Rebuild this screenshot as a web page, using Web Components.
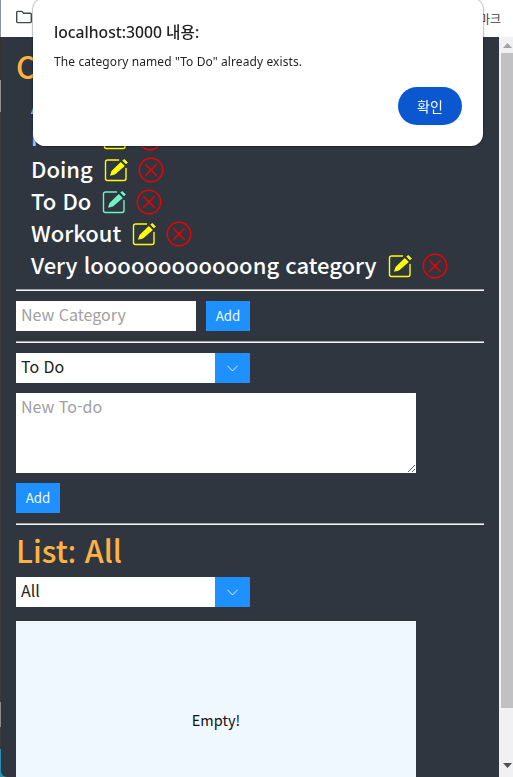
<!DOCTYPE html>
<html lang="ko">
<head>
<meta charset="utf-8">
<title>To-do</title>
<style>
  html, body { margin: 0; height: 777px; overflow: hidden; background: #fff; }
  /* the CJK cut raises its colon, the reference has it on the baseline */
  .colon { font-family: "Noto Sans", sans-serif; }
</style>
</head>
<body>
<browser-frame>
  <todo-title>Categories</todo-title>
  <category-list>
    <category-row active>All</category-row>
    <category-row active>Notes</category-row>
    <category-row>Doing</category-row>
    <category-row hover>To Do</category-row>
    <category-row>Workout</category-row>
    <category-row>Very loooooooooooong category</category-row>
  </category-list>
  <todo-rule class="first"></todo-rule>
  <new-category></new-category>
  <todo-rule></todo-rule>
  <new-todo></new-todo>
  <todo-rule class="last"></todo-rule>
  <todo-title>List<span class="colon">:</span> All</todo-title>
  <select-box value="All"></select-box>
  <empty-list>Empty!</empty-list>
</browser-frame>
<alert-dialog heading="localhost:3000 내용:" button="확인">The category named "To Do" already exists.</alert-dialog>

<script>
const UI_FONT = `"Noto Sans CJK JP", "Noto Sans", sans-serif`;

class BrowserFrame extends HTMLElement {
  constructor(){
    super();
    this.attachShadow({mode: "open"});
    this.shadowRoot.innerHTML = /* html */`
    <style>
      :host {
        display: flex;
        flex-direction: column;
        width: 513px;
        height: 777px;
        overflow: hidden;
        font-family: ${UI_FONT};
      }
      .bookmarks {
        flex: 0 0 37px;
        display: flex;
        align-items: center;
        justify-content: space-between;
        padding: 0 12px 0 15px;
        background: #fff;
        box-shadow: inset 1px 0 0 #8d979c;
        font: 12px "Noto Sans CJK KR", sans-serif;
        color: #3c4043;
      }
      .bookmarks svg { display: block; margin-top: -3px; }
      .bookmarks span { margin-top: -1px; }
      .window {
        flex: 1;
        min-height: 0;
        display: flex;
        background: linear-gradient(#333 0 43px, #8f8f8f 43px 75px, #3a3a3a 75px 665px, #8a8a8a 665px 690px, #3a3a3a 690px 712px, #2a8fb0 712px);
      }
      .page {
        flex: 1;
        min-width: 0;
        margin-left: 1px;
        padding: 4px 15px 0 15px;
        background: #2f3640;
        border-bottom-left-radius: 6px;
        overflow: hidden;
      }
      .scrollbar {
        flex: 0 0 14px;
        display: flex;
        flex-direction: column;
        align-items: flex-end;
        background: #f1f1f1;
      }
      .arrow {
        flex: 0 0 16px;
        width: 12px;
        display: flex;
        align-items: center;
        justify-content: center;
      }
      .thumb { flex: 0 0 655px; width: 12px; background: #c1c1c1; }
      .spacer { flex: 1; }
    </style>
    <div class="bookmarks">
      <svg width="18" height="14" viewBox="0 0 18 14" fill="none" stroke="#45484c" stroke-width="1.4" stroke-linejoin="round">
        <path d="M1.700 2.400a1 1 0 0 1 1-1h4.200l1.800 1.900h6.600a1 1 0 0 1 1 1v7.300a1 1 0 0 1-1 1H2.700a1 1 0 0 1-1-1z"/>
      </svg>
      <span>모든 북마크</span>
    </div>
    <div class="window">
      <div class="page"><slot></slot></div>
      <div class="scrollbar">
        <div class="arrow"><svg width="9" height="5"><path d="M4.500 0 9 5H0z" fill="#a3a3a3"/></svg></div>
        <div class="thumb"></div>
        <div class="spacer"></div>
        <div class="arrow"><svg width="9" height="5"><path d="M0 0h9L4.500 5z" fill="#505050"/></svg></div>
        <div style="height:4px"></div>
      </div>
    </div>
    `;
  }
}

class TodoTitle extends HTMLElement {
  constructor(){
    super();
    this.attachShadow({mode: "open"});
    this.shadowRoot.innerHTML = /* html */`
    <style>
      :host {
        display: block;
        font-size: 30.5px;
        font-weight: 500;
        line-height: 50px;
        height: 52px;
        color: #ffb142;
        white-space: nowrap;
      }
    </style>
    <slot></slot>
    `;
  }
}

class CategoryList extends HTMLElement {
  constructor(){
    super();
    this.attachShadow({mode: "open"});
    this.shadowRoot.innerHTML = /* html */`
    <style>
      :host { display: block; margin-top: -3px; padding-left: 15px; }
    </style>
    <slot></slot>
    `;
  }
}

class CategoryRow extends HTMLElement {
  constructor(){
    super();
    this.attachShadow({mode: "open"});
    this.shadowRoot.innerHTML = /* html */`
    <style>
      :host {
        display: flex;
        align-items: center;
        height: 32px;
        font-size: 22px;
        font-weight: 500;
        color: #fff;
        white-space: nowrap;
        --edit-color: #ffff00;
      }
      :host([active]) { color: #9fd4ff; }
      :host([hover]) { --edit-color: #6ff2c4; }
      .label { margin-top: -4px; }
      .edit { margin-left: 11px; color: var(--edit-color); }
      .remove { margin-left: 10px; }
      svg { display: block; flex: none; }
    </style>
    <span class="label"><slot></slot></span>
    <svg class="edit" width="24" height="24" viewBox="0 0 24 24">
      <path d="M14.500 2H3.500a2 2 0 0 0-2 2v16.500a2 2 0 0 0 2 2H20a2 2 0 0 0 2-2V10.500" fill="none" stroke="currentColor" stroke-width="1.4" stroke-linecap="round"/>
      <path d="M6 17.800 7.500 13 16.800 3.900l4 4L11 16.400z" fill="currentColor"/>
      <path d="M20.200 1.200 23.500 4.500 22 6 18.700 2.700z" fill="currentColor" stroke="currentColor" stroke-width=".6" stroke-linejoin="round"/>
    </svg>
    <svg class="remove" width="26" height="26" viewBox="0 0 26 26" fill="none" stroke="#f00000" stroke-width="1.5">
      <circle cx="13" cy="13" r="11.700"/>
      <path d="M7.300 7.300 18.700 18.700M18.700 7.300 7.300 18.700"/>
    </svg>
    `;
  }
}

class TodoRule extends HTMLElement {
  constructor(){
    super();
    this.attachShadow({mode: "open"});
    this.shadowRoot.innerHTML = /* html */`
    <style>
      :host {
        display: block;
        height: 1px;
        margin: 10px 0;
        background: #a3a5a8;
        border-bottom: 1px solid #f4f4f4;
      }
      :host(.first) { margin-top: 7px; }
      :host(.last) { margin-bottom: 0; }
    </style>
    `;
  }
}

const FIELD_STYLES = /* css */`
  input, textarea, select {
    box-sizing: border-box;
    margin: 0;
    border: 0;
    border-radius: 0;
    outline: 0;
    background: #fff;
    color: #222;
    font: 16px ${UI_FONT};
  }
  ::placeholder { color: #a0a0a0; opacity: 1; }
`;

const BUTTON_STYLES = /* css */`
  button {
    width: 44px;
    height: 30px;
    padding: 0 0 1px;
    border: 0;
    background: #1e90ff;
    color: #f0f8ff;
    font: 13.333px ${UI_FONT};
  }
`;

class NewCategory extends HTMLElement {
  constructor(){
    super();
    this.attachShadow({mode: "open"});
    this.shadowRoot.innerHTML = /* html */`
    <style>
      :host { display: flex; column-gap: 10px; }
      ${FIELD_STYLES}
      ${BUTTON_STYLES}
      input { width: 180px; height: 30px; padding: 0 5px 5px; }
    </style>
    <input placeholder="New Category">
    <button>Add</button>
    `;
  }
}

class SelectBox extends HTMLElement {
  constructor(){
    super();
    this.attachShadow({mode: "open"});
    const value = this.getAttribute("value");
    this.shadowRoot.innerHTML = /* html */`
    <style>
      :host { display: flex; width: 234px; height: 30px; }
      ${FIELD_STYLES}
      select { flex: 1; min-width: 0; padding: 0 5px 4px; appearance: none; }
      .arrow {
        flex: 0 0 35px;
        display: flex;
        align-items: center;
        justify-content: center;
        background: #1e90ff;
      }
    </style>
    <select><option>${value}</option></select>
    <div class="arrow">
      <svg width="11" height="7" viewBox="0 0 11 7" fill="none" stroke="#e8f3ff" stroke-width="1">
        <path d="M.5.800 5.500 6l5-5.200"/>
      </svg>
    </div>
    `;
  }
}

class NewTodo extends HTMLElement {
  constructor(){
    super();
    this.attachShadow({mode: "open"});
    this.shadowRoot.innerHTML = /* html */`
    <style>
      :host { display: flex; flex-direction: column; row-gap: 10px; align-items: flex-start; }
      ${FIELD_STYLES}
      ${BUTTON_STYLES}
      textarea { display: block; width: 400px; height: 80px; padding: 1px 5px; }
    </style>
    <select-box value="To Do"></select-box>
    <textarea placeholder="New To-do"></textarea>
    <button>Add</button>
    `;
  }
}

class EmptyList extends HTMLElement {
  constructor(){
    super();
    this.attachShadow({mode: "open"});
    this.shadowRoot.innerHTML = /* html */`
    <style>
      :host {
        display: flex;
        align-items: center;
        justify-content: center;
        box-sizing: border-box;
        width: 400px;
        height: 200px;
        margin-top: 14px;
        padding-bottom: 4px;
        background: #f0f8ff;
        color: #111;
        font-size: 14.5px;
      }
    </style>
    <slot></slot>
    `;
  }
}

class AlertDialog extends HTMLElement {
  constructor(){
    super();
    this.attachShadow({mode: "open"});
    this.shadowRoot.innerHTML = /* html */`
    <style>
      :host {
        position: fixed;
        left: 33px;
        top: -2px;
        box-sizing: border-box;
        width: 450px;
        height: 148px;
        padding: 24px 21px 0;
        display: flex;
        flex-direction: column;
        background: #fff;
        border-radius: 12px;
        box-shadow: 0 0 1px 1px rgba(0, 0, 0, .2), 0 1px 3px rgba(0, 0, 0, .15);
        font-family: "Noto Sans", "Noto Sans CJK KR", sans-serif;
        color: #1f1f1f;
      }
      h1 {
        margin: 0;
        font-size: 15.7px;
        font-weight: 500;
        line-height: 20px;
      }
      p {
        margin: 11px 0 0;
        font-size: 12px;
        line-height: 18px;
        letter-spacing: .1px;
      }
      .actions { margin-top: auto; padding-bottom: 21px; display: flex; justify-content: flex-end; }
      button {
        width: 64px;
        height: 38px;
        padding: 0;
        border: 0;
        border-radius: 19px;
        background: #0b57d0;
        color: #fff;
        font: 14px "Noto Sans CJK KR", sans-serif;
      }
    </style>
    <h1>${this.getAttribute("heading")}</h1>
    <p><slot></slot></p>
    <div class="actions"><button>${this.getAttribute("button")}</button></div>
    `;
  }
}

customElements.define('browser-frame', BrowserFrame);
customElements.define('todo-title', TodoTitle);
customElements.define('category-list', CategoryList);
customElements.define('category-row', CategoryRow);
customElements.define('todo-rule', TodoRule);
customElements.define('new-category', NewCategory);
customElements.define('select-box', SelectBox);
customElements.define('new-todo', NewTodo);
customElements.define('empty-list', EmptyList);
customElements.define('alert-dialog', AlertDialog);
</script>
</body>
</html>
